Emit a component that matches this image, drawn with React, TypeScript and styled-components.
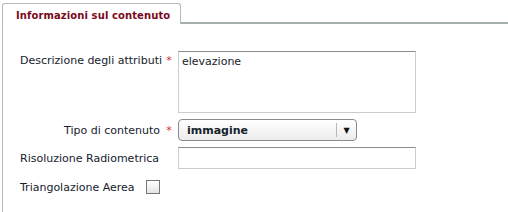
import React, { useState } from 'react'
import styled, { createGlobalStyle } from 'styled-components'

const GlobalStyle = createGlobalStyle`
  body {
    margin: 0;
    background: #fff;
    font-family: 'DejaVu Sans', Verdana, sans-serif;
    font-size: 11px;
  }
`

const Panel = styled.div`
  margin: 3px 0 0 2px;
`

const TabStrip = styled.div`
  display: flex;
  align-items: flex-end;
`

const Tab = styled.div`
  width: 179px;
  height: 21px;
  border: 1px solid #b4bab8;
  border-bottom: none;
  border-radius: 3px 3px 0 0;
  box-sizing: border-box;
  padding: 6px 0 0 13px;
  font-weight: bold;
  font-size: 10px;
  letter-spacing: 0.1px;
  color: #7a0a1a;
  background: #fff;
`

const TabFiller = styled.div`
  flex: 1;
  border-bottom: 2px solid #a4aeaa;
  height: 0;
`

const Body = styled.div`
  border-left: 1px solid #b8bcbc;
  height: 188px;
  box-sizing: border-box;
  padding: 27px 0 0 17px;
`

const Form = styled.div`
  display: grid;
  grid-template-columns: 140px 18px 238px;
  row-gap: 6px;
  color: #15222c;
`

const Label = styled.div<{ $align?: string; $top?: boolean }>`
  text-align: ${p => p.$align || 'left'};
  align-self: ${p => (p.$top ? 'start' : 'center')};
  padding-top: ${p => (p.$top ? '3px' : '0')};
  white-space: nowrap;
`

const Required = styled.span<{ $top?: boolean }>`
  color: #d8242c;
  font-size: 11px;
  text-align: center;
  align-self: ${p => (p.$top ? 'start' : 'center')};
  padding-top: ${p => (p.$top ? '3px' : '0')};
`

const Empty = styled.span``

const TextArea = styled.textarea`
  height: 62px;
  box-sizing: border-box;
  resize: none;
  border: 1px solid #cccccc;
  border-top-color: #8c8c8c;
  padding: 3px 3px;
  font-family: inherit;
  font-size: 11px;
  color: #15222c;
  outline: none;
`

const TextInput = styled.input`
  height: 22px;
  box-sizing: border-box;
  border: 1px solid #cccccc;
  border-top-color: #8c8c8c;
  font-family: inherit;
  font-size: 11px;
  outline: none;
`

const Select = styled.div`
  width: 179px;
  height: 22px;
  box-sizing: border-box;
  border: 1px solid #8a8a8a;
  border-radius: 4px;
  background: linear-gradient(#ffffff, #ececec);
  display: flex;
  align-items: center;
  font-weight: bold;
  color: #15222c;
`

const SelectValue = styled.span`
  flex: 1;
  padding-left: 8px;
`

const SelectArrow = styled.span`
  width: 19px;
  height: 14px;
  border-left: 1px solid #b8b8b8;
  display: flex;
  align-items: center;
  justify-content: center;
  font-size: 8px;
  color: #111;
`

const CheckRow = styled.div`
  grid-column: 1 / 4;
  display: flex;
  align-items: center;
  gap: 11px;
  margin-top: 5px;
`

const Check = styled.span`
  width: 14px;
  height: 14px;
  box-sizing: border-box;
  border: 1px solid #777;
  background: linear-gradient(#ffffff, #e4e4e4);
`

export default function App() {
  const [desc, setDesc] = useState('elevazione')
  const [ris, setRis] = useState('')

  return (
    <>
      <GlobalStyle />
      <Panel>
        <TabStrip>
          <Tab>Informazioni sul contenuto</Tab>
          <TabFiller />
        </TabStrip>
        <Body>
          <Form>
            <Label $top>Descrizione degli attributi</Label>
            <Required $top>*</Required>
            <TextArea value={desc} onChange={e => setDesc(e.target.value)} />

            <Label $align="right">Tipo di contenuto</Label>
            <Required>*</Required>
            <Select>
              <SelectValue>immagine</SelectValue>
              <SelectArrow>▼</SelectArrow>
            </Select>

            <Label>Risoluzione Radiometrica</Label>
            <Empty />
            <TextInput value={ris} onChange={e => setRis(e.target.value)} />

            <CheckRow>
              <span>Triangolazione Aerea</span>
              <Check />
            </CheckRow>
          </Form>
        </Body>
      </Panel>
    </>
  )
}
